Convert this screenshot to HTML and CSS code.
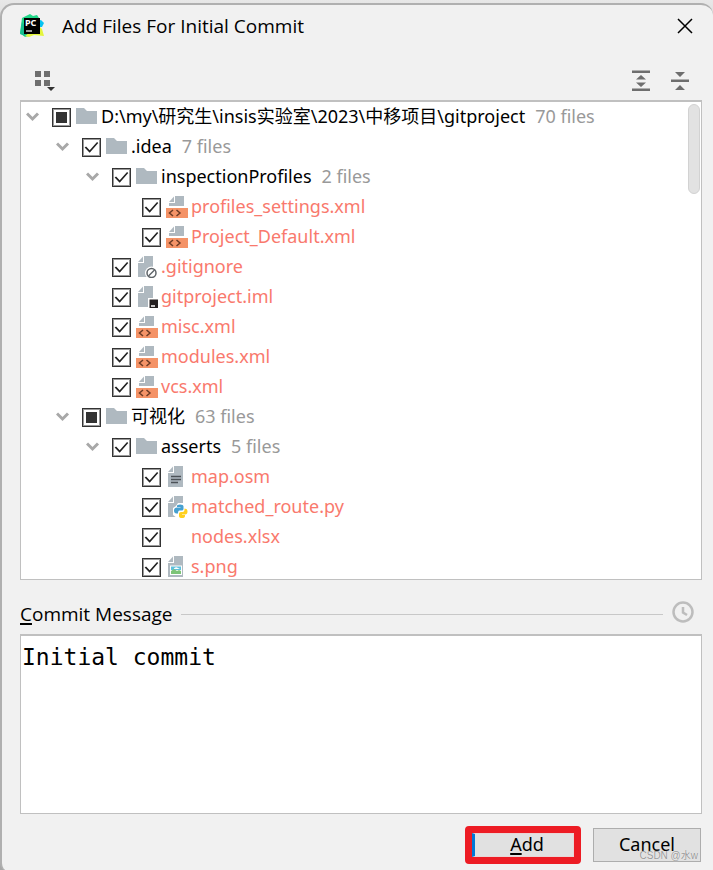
FILE: index.html
```html
<!DOCTYPE html>
<html lang="en">
<head>
    <meta charset="UTF-8">
    <meta name="viewport" content="width=device-width, initial-scale=1.0">
    <title>Add Files For Initial Commit</title>
    <link rel="stylesheet" href="styles.css">
</head>

<body>
    <!-- Icons shared by the tree rows -->
    <svg class="sprite" width="0" height="0" aria-hidden="true">
        <symbol id="chevron" viewBox="0 0 14 10">
            <path d="M1 1.500L6.500 7L12 1.500" fill="none" stroke="#a8a8a8" stroke-width="3"/>
        </symbol>
        <symbol id="folder" viewBox="0 0 22 22">
            <path d="M0 2H8L11 5H21V18H0Z" fill="#afb9c0"/>
        </symbol>
        <symbol id="page" viewBox="0 0 22 22">
            <path d="M8 0H17V21H2V7H8Z" fill="#afb9c0"/>
            <path d="M7 0.500V6H2Z" fill="#afb9c0"/>
        </symbol>
        <symbol id="xml" viewBox="0 0 22 22">
            <path d="M9 0H18V10H3V7H9Z" fill="#afb9c0"/>
            <path d="M8 0.500V6H3Z" fill="#afb9c0"/>
            <path d="M0 12H22V22H0Z" fill="#f49367"/>
            <path d="M7 14L3.500 17L7 20M10.500 14L14 17L10.500 20" fill="none" stroke="#6b3a24" stroke-width="1.500"/>
        </symbol>
        <symbol id="ignored" viewBox="0 0 22 22">
            <use href="#page"/>
            <circle cx="15.500" cy="17" r="6.500" fill="#fff"/>
            <circle cx="15.500" cy="17" r="4.500" fill="none" stroke="#5e6468" stroke-width="1.500"/>
            <path d="M12.500 20L18.500 14" stroke="#5e6468" stroke-width="1.500"/>
        </symbol>
        <symbol id="module" viewBox="0 0 22 22">
            <use href="#page"/>
            <path d="M12 12H22V22H12Z" fill="#fff"/>
            <path d="M13.500 13.500H22V22H13.500Z" fill="#231f20"/>
            <path d="M15 20H19" stroke="#fff" stroke-width="1.500"/>
        </symbol>
        <symbol id="text" viewBox="0 0 22 22">
            <use href="#page"/>
            <path d="M5 10.500H15M5 13.500H15M5 16.500H12" stroke="#4c5257" stroke-width="1.500"/>
        </symbol>
        <symbol id="python" viewBox="0 0 22 22">
            <use href="#page"/>
            <path d="M12 7H17L20 10V11L22 12V22H11L7 19V12L10 10Z" fill="#fff"/>
            <path d="M11 10Q11 8.500 14 8.500Q17.500 8.500 17.500 10.500V13Q17.500 14.500 15.500 14.500H13.500Q12 14.500 12 17.500H10.500Q8 17.500 8 14.500Q8 11.500 11 11.500H14.500V11H11Z" fill="#46a0d0"/>
            <path d="M18.500 12.500Q21.500 12.500 21.500 15.500Q21.500 18.500 19 18.500H16V19H19V20Q19 22 16 22Q13 22 13 20V17.500Q13 16 15 16H16.500Q18.500 16 18.500 14Z" fill="#ffd01e"/>
        </symbol>
        <symbol id="image" viewBox="0 0 22 22">
            <use href="#page"/>
            <path d="M4 9.500H16V19H4Z" fill="#fff"/>
            <path d="M5 10.500H15V14H5Z" fill="#5fc0dc"/>
            <path d="M5 15L8 13L11 15L13 14L15 15V18H5Z" fill="#7dc477"/>
            <path d="M8 12.500Q10 10.500 12 12L14 13H8Z" fill="#fff"/>
        </symbol>
    </svg>

    <main class="dialog">
        <header class="titlebar">
            <svg class="app-icon" width="24" height="24" viewBox="0 0 24 24" aria-hidden="true">
                <path d="M2 4L6 2L10 0L13 2L17 1L19 4L18 12L9 22L5 23L0 19Z" fill="#21d789"/>
                <path d="M2 8L0 20L5 22L10 20Z" fill="#16c08f"/>
                <path d="M18 7L21 6L24 9L22 13L18 13Z" fill="#07c3f2"/>
                <path d="M19 12L22 15L24 22L14 21L9 23L5 22L14 15Z" fill="#e4f53c"/>
                <path d="M4 4H20V20H4Z" fill="#000"/>
                <text class="app-icon-text" x="5" y="12">PC</text>
                <path d="M6 17H12" stroke="#fff" stroke-width="1.200"/>
            </svg>
            <h1>Add Files For Initial Commit</h1>
            <button class="icon-button" type="button" aria-label="Close">
                <svg width="16" height="16" viewBox="0 0 16 16"><path d="M1 1L15 15M15 1L1 15" stroke="#000" stroke-width="1.500"/></svg>
            </button>
        </header>

        <div class="toolbar">
            <button class="icon-button" type="button" aria-label="Group by">
                <svg width="22" height="22" viewBox="0 0 22 22">
                    <path d="M1 1H7V7H1ZM10 1H16V7H10ZM1 10H7V16H1ZM10 10H16V16H10Z" fill="#6e6e6e"/>
                    <path d="M12 16H22L17 22Z" fill="#f1f1f1"/>
                    <path d="M13 17H21L17 21Z" fill="#333"/>
                </svg>
            </button>
            <div class="toolbar-right">
                <button class="icon-button" type="button" aria-label="Expand all">
                    <svg width="18" height="22" viewBox="0 0 18 22">
                        <path d="M0 0.500H18V3H0ZM0 18.500H18V21H0Z" fill="#6e6e6e"/>
                        <path d="M9 5L14 9.500H4ZM9 17L14 12.500H4Z" fill="#6e6e6e"/>
                    </svg>
                </button>
                <button class="icon-button" type="button" aria-label="Collapse all">
                    <svg width="18" height="22" viewBox="0 0 18 22">
                        <path d="M0 9.500H18V12H0Z" fill="#6e6e6e"/>
                        <path d="M9 7L14 2H4ZM9 15L14 20H4Z" fill="#6e6e6e"/>
                    </svg>
                </button>
            </div>
        </div>

        <div class="tree-box">
            <ul class="tree">
                <li>
                    <div class="row">
                        <svg class="arrow"><use href="#chevron"/></svg>
                        <input type="checkbox" id="root" class="partial">
                        <svg class="icon"><use href="#folder"/></svg>
                        <label for="root">D:\my\研究生\insis实验室\2023\中移项目\gitproject</label>
                        <span class="count">70 files</span>
                    </div>
                    <ul>
                        <li>
                            <div class="row">
                                <svg class="arrow"><use href="#chevron"/></svg>
                                <input type="checkbox" id="idea" checked>
                                <svg class="icon"><use href="#folder"/></svg>
                                <label for="idea">.idea</label>
                                <span class="count">7 files</span>
                            </div>
                            <ul>
                                <li>
                                    <div class="row">
                                        <svg class="arrow"><use href="#chevron"/></svg>
                                        <input type="checkbox" id="profiles" checked>
                                        <svg class="icon"><use href="#folder"/></svg>
                                        <label for="profiles">inspectionProfiles</label>
                                        <span class="count">2 files</span>
                                    </div>
                                    <ul>
                                        <li class="row file">
                                            <input type="checkbox" id="settings" checked>
                                            <svg class="icon"><use href="#xml"/></svg>
                                            <label for="settings">profiles_settings.xml</label>
                                        </li>
                                        <li class="row file">
                                            <input type="checkbox" id="default" checked>
                                            <svg class="icon"><use href="#xml"/></svg>
                                            <label for="default">Project_Default.xml</label>
                                        </li>
                                    </ul>
                                </li>
                                <li class="row file">
                                    <input type="checkbox" id="gitignore" checked>
                                    <svg class="icon"><use href="#ignored"/></svg>
                                    <label for="gitignore">.gitignore</label>
                                </li>
                                <li class="row file">
                                    <input type="checkbox" id="iml" checked>
                                    <svg class="icon"><use href="#module"/></svg>
                                    <label for="iml">gitproject.iml</label>
                                </li>
                                <li class="row file">
                                    <input type="checkbox" id="misc" checked>
                                    <svg class="icon"><use href="#xml"/></svg>
                                    <label for="misc">misc.xml</label>
                                </li>
                                <li class="row file">
                                    <input type="checkbox" id="modules" checked>
                                    <svg class="icon"><use href="#xml"/></svg>
                                    <label for="modules">modules.xml</label>
                                </li>
                                <li class="row file">
                                    <input type="checkbox" id="vcs" checked>
                                    <svg class="icon"><use href="#xml"/></svg>
                                    <label for="vcs">vcs.xml</label>
                                </li>
                            </ul>
                        </li>
                        <li>
                            <div class="row">
                                <svg class="arrow"><use href="#chevron"/></svg>
                                <input type="checkbox" id="visual" class="partial">
                                <svg class="icon"><use href="#folder"/></svg>
                                <label for="visual">可视化</label>
                                <span class="count">63 files</span>
                            </div>
                            <ul>
                                <li>
                                    <div class="row">
                                        <svg class="arrow"><use href="#chevron"/></svg>
                                        <input type="checkbox" id="asserts" checked>
                                        <svg class="icon"><use href="#folder"/></svg>
                                        <label for="asserts">asserts</label>
                                        <span class="count">5 files</span>
                                    </div>
                                    <ul>
                                        <li class="row file">
                                            <input type="checkbox" id="map" checked>
                                            <svg class="icon"><use href="#text"/></svg>
                                            <label for="map">map.osm</label>
                                        </li>
                                        <li class="row file">
                                            <input type="checkbox" id="route" checked>
                                            <svg class="icon"><use href="#python"/></svg>
                                            <label for="route">matched_route.py</label>
                                        </li>
                                        <li class="row file">
                                            <input type="checkbox" id="nodes" checked>
                                            <svg class="icon"></svg>
                                            <label for="nodes">nodes.xlsx</label>
                                        </li>
                                        <li class="row file">
                                            <input type="checkbox" id="png" checked>
                                            <svg class="icon"><use href="#image"/></svg>
                                            <label for="png">s.png</label>
                                        </li>
                                    </ul>
                                </li>
                            </ul>
                        </li>
                    </ul>
                </li>
            </ul>
            <div class="scroll-thumb"></div>
        </div>

        <div class="message-head">
            <label for="message"><u>C</u>ommit Message</label>
            <span class="line"></span>
            <button class="icon-button" type="button" aria-label="Message history">
                <svg width="22" height="22" viewBox="0 0 22 22">
                    <circle cx="11" cy="11" r="9.500" fill="none" stroke="#bdbdbd" stroke-width="2.500"/>
                    <path d="M11 6V11.500L15 14" fill="none" stroke="#bdbdbd" stroke-width="2.500"/>
                </svg>
            </button>
        </div>
        <textarea id="message" spellcheck="false">Initial commit</textarea>

        <div class="buttons">
            <div class="highlight"><button class="add" type="submit"><u>A</u>dd</button></div>
            <div class="cancel-wrap">
                <button class="cancel" type="button">Cancel</button>
                <span class="watermark">CSDN @水w</span>
            </div>
        </div>
    </main>

    <script>
        // Folders with only some files ticked
        document.querySelectorAll('.partial').forEach(box => {
            box.indeterminate = true;
        });
    </script>
</body>
</html>
```
FILE: styles.css
```css
* {
    box-sizing: border-box;
}

body {
    margin: 0;
    padding-top: 3px;
    background: linear-gradient(#e8e8e8, #a8a8a8 120px);
    font-family: "Noto Sans", "Noto Sans CJK SC", sans-serif;
    font-size: 18px;
    line-height: 24px;
    color: #000;
}

.sprite {
    position: absolute;
}

.dialog {
    display: flex;
    flex-direction: column;
    min-height: calc(100vh - 3px);
    padding: 0 11px 7px 18px;
    background: #f1f1f1;
    border-top: 2px solid #b0b0b0;
    border-left: 2px solid #b0b0b0;
    border-radius: 14px 12px 0 8px;
}

.titlebar {
    display: flex;
    align-items: center;
    height: 42px;
    padding-right: 9px;
}

.app-icon-text {
    font-size: 9px;
    font-weight: bold;
    fill: #fff;
}

h1,
.message-head label {
    font-family: "Open Sans", sans-serif;
    font-size: 19px;
    font-weight: normal;
}

h1 {
    flex: 1;
    margin: 0 0 0 18px;
}

.icon-button {
    display: flex;
    padding: 0;
    border: none;
    background: none;
    cursor: pointer;
}

.toolbar {
    display: flex;
    align-items: center;
    justify-content: space-between;
    height: 53px;
    padding: 14px 13px 0 14px;
}

.toolbar-right {
    display: flex;
    gap: 21px;
}

.tree-box {
    position: relative;
    flex: 1 0 480px;
    height: 480px;
    overflow: hidden;
    background: #fff;
    border: 1px solid #c0c0c0;
    border-top-width: 2px;
}

.tree,
.tree ul {
    margin: 0;
    padding: 0;
    list-style: none;
}

.tree {
    padding-left: 5px;
}

.tree ul {
    padding-left: 30px;
}

.row {
    display: flex;
    align-items: center;
    height: 30px;
    white-space: nowrap;
}

.row label,
.count {
    padding-bottom: 2px;
}

.file {
    padding-left: 26px;
    color: #f9796d;
}

.arrow {
    width: 14px;
    height: 10px;
    margin-right: 12px;
}

.icon {
    width: 22px;
    height: 22px;
    margin: 0 3px 0 5px;
}

.count {
    margin-left: 10px;
    color: #999;
}

input[type="checkbox"] {
    appearance: none;
    width: 19px;
    height: 19px;
    margin: 0;
    background: #fff;
    border: 1px solid #333;
    box-shadow: inset 0 0 0 1px #999;
}

input[type="checkbox"]:checked::before {
    content: "";
    display: block;
    height: 15px;
    margin: 1px;
    background: #222;
    clip-path: polygon(4% 54%, 14% 46%, 38% 72%, 87% 16%, 95% 24%, 38% 89%);
}

input[type="checkbox"]:indeterminate::before {
    content: "";
    display: block;
    height: 11px;
    margin: 3px;
    background: #333;
}

.scroll-thumb {
    position: absolute;
    top: 2px;
    right: 1px;
    width: 12px;
    height: 90px;
    background: #e2e2e2;
    border: 1px solid #d2d2d2;
    border-radius: 6px;
}

.message-head {
    display: flex;
    align-items: center;
    height: 54px;
    padding: 10px 8px 0 0;
}

.message-head label,
.message-head .line {
    margin-top: 4px;
}

.message-head .line {
    flex: 1;
    height: 1px;
    margin-left: 8px;
    margin-right: 9px;
    background: #c8c8c8;
}

u {
    text-decoration-thickness: 2px;
    text-underline-offset: 2px;
    text-decoration-skip-ink: none;
}

textarea {
    display: block;
    width: 100%;
    height: 180px;
    padding: 6px 1px;
    background: #fff;
    border: 1px solid #c0c0c0;
    border-top-width: 2px;
    border-radius: 0;
    outline: none;
    resize: none;
    color: #000;
    font-family: "DejaVu Sans Mono", monospace;
    font-size: 23px;
    line-height: 30px;
}

.buttons {
    display: flex;
    align-items: center;
    justify-content: flex-end;
    gap: 12px;
    margin-top: 12px;
    padding-right: 1px;
}

.highlight {
    border: 7px solid #ed1c24;
    border-radius: 4px;
}

.add,
.cancel {
    display: block;
    background: #e1e1e1;
    color: #000;
    font-family: inherit;
    font-size: 18px;
    line-height: 20px;
}

.add {
    width: 102px;
    height: 24px;
    padding: 0 0 3px 6px;
    border: 1px solid #e9d5d5;
    border-left: 3px solid #0078d7;
}

.cancel-wrap {
    position: relative;
}

.cancel {
    width: 108px;
    height: 34px;
    padding: 0 0 2px;
    border: 1px solid #adadad;
}

.watermark {
    position: absolute;
    right: 3px;
    bottom: 0;
    color: #999;
    font-family: "Liberation Sans", "Noto Sans CJK SC", sans-serif;
    font-size: 10px;
    line-height: 12px;
    text-shadow: 0 0 1px #fff;
    white-space: nowrap;
}
```
